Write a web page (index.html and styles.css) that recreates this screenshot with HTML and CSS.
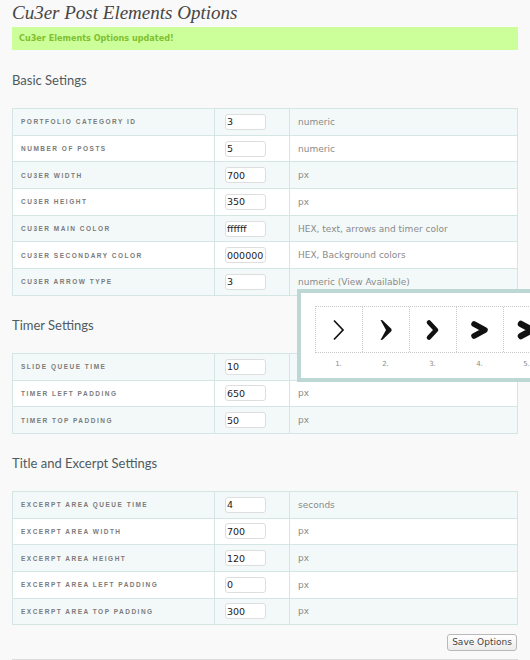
FILE: index.html
```html
<!DOCTYPE html>
<html>
<head>
<meta charset="utf-8">
<link rel="stylesheet" href="styles.css">
</head>
<body>
<div class="wrap">
  <h2 class="title">Cu3er Post Elements Options</h2>
  <div class="notice">Cu3er Elements Options updated!</div>

  <h3 class="section first">Basic Setings</h3>
  <table class="opts">
    <tr><td class="lbl">Portfolio Category ID</td><td class="inp"><input type="text" value="3"></td><td class="desc">numeric</td></tr>
    <tr><td class="lbl">Number of Posts</td><td class="inp"><input type="text" value="5"></td><td class="desc">numeric</td></tr>
    <tr><td class="lbl">Cu3er Width</td><td class="inp"><input type="text" value="700"></td><td class="desc">px</td></tr>
    <tr><td class="lbl">Cu3er Height</td><td class="inp"><input type="text" value="350"></td><td class="desc">px</td></tr>
    <tr><td class="lbl">Cu3er Main Color</td><td class="inp"><input type="text" value="ffffff"></td><td class="desc">HEX, text, arrows and timer color</td></tr>
    <tr><td class="lbl">Cu3er Secondary Color</td><td class="inp"><input type="text" value="000000"></td><td class="desc">HEX, Background colors</td></tr>
    <tr><td class="lbl">Cu3er Arrow Type</td><td class="inp"><input type="text" value="3"></td><td class="desc">numeric (View Available)</td></tr>
  </table>

  <h3 class="section">Timer Settings</h3>
  <table class="opts">
    <tr><td class="lbl">Slide Queue Time</td><td class="inp"><input type="text" value="10"></td><td class="desc">seconds</td></tr>
    <tr><td class="lbl">Timer Left Padding</td><td class="inp"><input type="text" value="650"></td><td class="desc">px</td></tr>
    <tr><td class="lbl">Timer Top Padding</td><td class="inp"><input type="text" value="50"></td><td class="desc">px</td></tr>
  </table>

  <h3 class="section">Title and Excerpt Settings</h3>
  <table class="opts">
    <tr><td class="lbl">Excerpt Area Queue Time</td><td class="inp"><input type="text" value="4"></td><td class="desc">seconds</td></tr>
    <tr><td class="lbl">Excerpt Area Width</td><td class="inp"><input type="text" value="700"></td><td class="desc">px</td></tr>
    <tr><td class="lbl">Excerpt Area Height</td><td class="inp"><input type="text" value="120"></td><td class="desc">px</td></tr>
    <tr><td class="lbl">Excerpt Area Left Padding</td><td class="inp"><input type="text" value="0"></td><td class="desc">px</td></tr>
    <tr><td class="lbl">Excerpt Area Top Padding</td><td class="inp"><input type="text" value="300"></td><td class="desc">px</td></tr>
  </table>

  <div class="actions"><button class="btn">Save Options</button></div>
  <div class="footer"></div>

  <div class="popup">
    <div class="arrows">
      <div class="cell"><svg width="14" height="22" viewBox="0 0 14 22"><polyline points="2,1.5 11,11 2,20.5" fill="none" stroke="#111" stroke-width="1.7"/></svg></div>
      <div class="cell"><svg width="14" height="22" viewBox="0 0 14 22"><polygon points="1.5,1 3.5,1.3 12.5,10 12.5,12 3.5,20.7 1.5,21 7,11" fill="#111"/></svg></div>
      <div class="cell"><svg width="16" height="22" viewBox="0 0 16 22"><polyline points="4,3.5 11,11 4,18.5" fill="none" stroke="#111" stroke-width="4.6" stroke-linecap="round" stroke-linejoin="round"/></svg></div>
      <div class="cell"><svg width="20" height="22" viewBox="0 0 20 22"><polyline points="4,5 15,11 4,17" fill="none" stroke="#111" stroke-width="5.5" stroke-linecap="round" stroke-linejoin="round"/></svg></div>
      <div class="cell"><svg width="20" height="22" viewBox="0 0 20 22"><polyline points="4,5 15,11 4,17" fill="none" stroke="#111" stroke-width="6.5" stroke-linecap="round" stroke-linejoin="round"/></svg></div>
    </div>
    <div class="nums">
      <span>1.</span><span>2.</span><span>3.</span><span>4.</span><span>5.</span>
    </div>
  </div>
</div>
</body>
</html>
```
FILE: styles.css
```css
html {
  overflow: hidden;
}
body {
  margin: 0;
  background: #f9f9f9;
  font-family: "DejaVu Sans", Verdana, sans-serif;
}
.wrap {
  position: relative;
  padding: 0 12px;
}
.title {
  margin: 0;
  font: italic 19px/26px "Liberation Serif", "DejaVu Serif", serif;
  color: #464646;
  font-weight: normal;
}
.notice {
  margin-top: 1px;
  height: 23px;
  line-height: 23px;
  padding-left: 7px;
  background: #ccff99;
  color: #80c030;
  font: bold 9px/23px "DejaVu Sans Condensed", "DejaVu Sans", sans-serif;
}
.section {
  margin: 21px 0 20px;
  font: normal 13px/16px Lato, "Open Sans", sans-serif;
  color: #4f5b5f;
}
.section.first {
  margin-top: 22px;
}
.opts {
  width: 100%;
  border-collapse: collapse;
  border: 1px solid #d3e6e4;
}
.opts tr:nth-child(odd) td {
  background: #f3f9f9;
}
.opts tr:nth-child(even) td {
  background: #ffffff;
}
.opts td {
  height: 25.7px;
  padding: 0;
  border: 1px solid #d3e6e4;
  vertical-align: middle;
}
.opts td.lbl {
  width: 193px;
  padding-left: 8px;
  font: bold 6.5px "Liberation Sans", Arial, sans-serif;
  letter-spacing: 1.5px;
  text-transform: uppercase;
  color: #7b7b7b;
}
.opts td.inp {
  width: 64px;
  padding-left: 10px;
}
.opts td.desc {
  padding-left: 8px;
  font-size: 9px;
  color: #8a8a8a;
}
.opts input {
  display: block;
  box-sizing: border-box;
  width: 41px;
  height: 16px;
  margin: 0;
  padding: 0 1px;
  border: 1px solid #dedede;
  border-radius: 3px;
  background: #fff;
  font: 9.5px "DejaVu Sans", Verdana, sans-serif;
  color: #222;
}
.actions {
  display: flex;
  justify-content: flex-end;
  margin-top: 9px;
}
.btn {
  box-sizing: border-box;
  width: 70px;
  height: 17px;
  margin-right: 1px;
  padding: 0;
  border: 1px solid #b9b9b9;
  border-radius: 3px;
  background: linear-gradient(#ffffff, #ececec);
  font: 9px/15px "DejaVu Sans", Verdana, sans-serif;
  color: #464646;
}
.footer {
  margin-top: 8px;
  border-top: 1px solid #dcdcdc;
  height: 20px;
}
.popup {
  position: absolute;
  left: 297px;
  top: 289px;
  box-sizing: border-box;
  width: 270px;
  height: 93px;
  padding: 13px 0 0 14px;
  border: 4px solid #bdd8d4;
  background: #fff;
}
.arrows {
  display: flex;
  width: max-content;
  border-top: 1px dotted #c8c8c8;
  border-bottom: 1px dotted #c8c8c8;
  border-left: 1px dotted #c8c8c8;
}
.cell {
  box-sizing: border-box;
  width: 47px;
  height: 45px;
  border-right: 1px dotted #c8c8c8;
  display: flex;
  align-items: center;
  justify-content: center;
}
.cell svg {
  display: block;
}
.nums {
  display: flex;
  margin-top: 6px;
}
.nums span {
  width: 47px;
  text-align: center;
  font-size: 7px;
  line-height: 10px;
  color: #8a8a8a;
}
```
